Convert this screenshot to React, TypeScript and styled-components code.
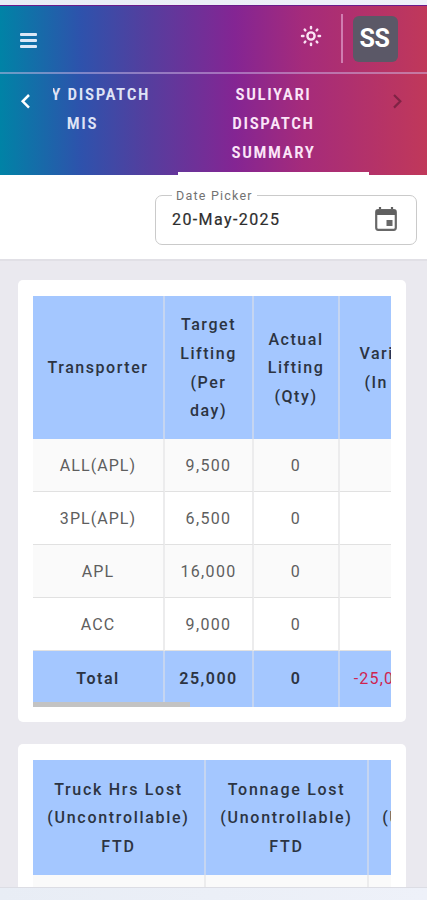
import React from "react";
import styled, { createGlobalStyle } from "styled-components";

const Global = createGlobalStyle`
  * { box-sizing: border-box; }
  body { margin: 0; background: #edf0f7; font-family: Roboto, "Liberation Sans", sans-serif; overflow: hidden; }
`;

const Page = styled.div`
  width: 427px;
  height: 900px;
  display: flex;
  flex-direction: column;
  padding: 5px 0 12px;
  background: linear-gradient(to right, #e8edf5, #eef1f9);
`;

const Masthead = styled.header`
  flex: none;
  height: 170px;
  background: linear-gradient(90deg, #0083a6 0%, #2e52ac 19%, #51409f 33%, #842593 55%, #a52b7b 71%, #c0385a 100%);
  border-top: 1px solid #6b1b8c;
`;

const TopBar = styled.div`
  height: 68px;
  display: flex;
  align-items: center;
  padding: 0 29px 4px 20px;
  border-bottom: 2px solid rgba(205, 185, 230, 0.5);
`;

const MenuButton = styled.button`
  display: flex;
  flex-direction: column;
  gap: 3px;
  padding: 6px 0 0;
  border: 0;
  background: none;
`;

const MenuBar = styled.span`
  width: 17px;
  height: 3px;
  border-radius: 1px;
  background: #dce8f7;
`;

const SunIcon = styled.svg`
  margin-left: auto;
  margin-right: 19px;
  margin-top: -2px;
`;

const Divider = styled.span`
  width: 2px;
  height: 49px;
  margin-right: 10px;
  margin-top: 3px;
  background: rgba(236, 190, 228, 0.55);
`;

const Avatar = styled.div`
  width: 45px;
  height: 46px;
  margin-top: 3px;
  border-radius: 6px;
  background: #5b5867;
  color: #fff;
  font-size: 25px;
  font-weight: 700;
  letter-spacing: -0.4px;
  padding-right: 2px;
  display: flex;
  align-items: center;
  justify-content: center;
`;

const TabStrip = styled.nav`
  height: 101px;
  display: flex;
`;

const ScrollArrow = styled.svg<{ $dim?: boolean }>`
  flex: none;
  width: ${(p) => (p.$dim ? 58 : 53)}px;
  height: 54px;
  color: ${(p) => (p.$dim ? "rgba(80,20,45,.55)" : "#fff")};
`;

const TabWindow = styled.div`
  width: 316px;
  display: flex;
  overflow: hidden;
`;

const Tab = styled.div<{ $w: number; $shift?: number; $active?: boolean }>`
  flex: none;
  width: ${(p) => p.$w}px;
  margin-left: ${(p) => p.$shift ?? 0}px;
  padding-top: 6px;
  text-align: center;
  color: ${(p) => (p.$active ? "#fbe5f8" : "#dfe3f6")};
  font-family: "Roboto Condensed", Roboto, sans-serif;
  font-stretch: 75%;
  font-size: 17px;
  font-weight: 600;
  line-height: 29px;
  letter-spacing: 1.6px;
  border-bottom: ${(p) => (p.$active ? "3px solid #fff" : "0")};
`;

const Line = styled.span`
  display: block;
  white-space: nowrap;
`;

const FilterBar = styled.section`
  flex: none;
  height: 86px;
  display: flex;
  justify-content: flex-end;
  padding: 14px 10px 0 0;
  background: #fff;
  border-bottom: 2px solid #e1e0e6;
`;

const DateField = styled.fieldset`
  width: 262px;
  height: 56px;
  margin: 0;
  padding: 0 17px 0 16px;
  border: 1px solid #cacaca;
  border-radius: 7px;
  display: flex;
  align-items: center;
  justify-content: space-between;
`;

const DateLegend = styled.legend`
  padding: 0 4px;
  height: 12px;
  font-size: 12.5px;
  line-height: 14px;
  letter-spacing: 1.22px;
  color: #727272;
`;

const DateValue = styled.span`
  font-size: 16px;
  line-height: 20px;
  letter-spacing: 1.4px;
  color: #2d2d2d;
  -webkit-text-stroke: 0.2px #2d2d2d;
  margin-top: -5px;
`;

const CalendarIcon = styled.svg`
  margin-top: -7px;
`;

const Content = styled.main`
  flex: 1;
  min-height: 0;
  overflow: hidden;
  display: flex;
  flex-direction: column;
  gap: 22px;
  padding: 19px 21px 0 18px;
  background: #eae9ef;
  border-bottom: 1px solid #dcdde4;
`;

const Card = styled.section`
  flex: none;
  height: 442px;
  padding: 16px 15px;
  border-radius: 5px;
  background: #fff;
`;

const TableWindow = styled.div`
  overflow: hidden;
`;

const Grid = styled.div<{ $cols: string; $rows: string }>`
  width: max-content;
  display: grid;
  grid-template-columns: ${(p) => p.$cols};
  grid-template-rows: ${(p) => p.$rows};
`;

type Kind = "head" | "odd" | "even" | "total";

const Cell = styled.div<{ $kind: Kind; $red?: boolean; $tracking?: number }>`
  display: flex;
  flex-direction: column;
  align-items: center;
  justify-content: center;
  font-size: 16px;
  line-height: 28.6px;
  letter-spacing: ${(p) => p.$tracking ?? 1.35}px;
  font-weight: ${(p) => (p.$red ? 400 : p.$kind === "head" ? 500 : p.$kind === "total" ? 600 : 400)};
  color: ${(p) => (p.$red ? "#cf2450" : p.$kind === "head" || p.$kind === "total" ? "#2c3442" : "#5e5e5e")};
  background: ${(p) => (p.$kind === "head" || p.$kind === "total" ? "#a4c7ff" : p.$kind === "odd" ? "#fafafa" : "#fff")};
  border-right: 2px solid ${(p) => (p.$kind === "head" || p.$kind === "total" ? "#c5d5f1" : "#ececed")};
  border-bottom: ${(p) => (p.$kind === "odd" || p.$kind === "even" ? "1px solid #e1e1e1" : "0")};
  padding-top: ${(p) => (p.$kind === "total" ? 0 : 2)}px;
`;

const ScrollThumb = styled.div`
  position: relative;
  width: 157px;
  height: 5px;
  margin-top: -5px;
  background: #c3c3c3;
`;

const transporterRows: { kind: Kind; cells: string[] }[] = [
  { kind: "odd", cells: ["ALL(APL)", "9,500", "0", ""] },
  { kind: "even", cells: ["3PL(APL)", "6,500", "0", ""] },
  { kind: "odd", cells: ["APL", "16,000", "0", ""] },
  { kind: "even", cells: ["ACC", "9,000", "0", ""] },
  { kind: "total", cells: ["Total", "25,000", "0", "-25,000.00"] },
];

const transporterHeads = [["Transporter"], ["Target", "Lifting", "(Per", "day)"], ["Actual", "Lifting", "(Qty)"], ["Variance", "(In Qty)"]];
const lossHeads = [["Truck Hrs Lost", "(Uncontrollable)", "FTD"], ["Tonnage Lost", "(Unontrollable)", "FTD"], ["Trucks Lost", "(Uncontrollable)", "MTD"]];

function Heads({ items, tracking }: { items: string[][]; tracking: number }) {
  return (
    <>
      {items.map((lines, i) => (
        <Cell key={i} $kind="head" $tracking={tracking}>
          {lines.map((t) => <Line key={t}>{t}</Line>)}
        </Cell>
      ))}
    </>
  );
}

export default function App() {
  return (
    <Page>
      <Global />
      <Masthead>
        <TopBar>
          <MenuButton aria-label="Menu"><MenuBar /><MenuBar /><MenuBar /></MenuButton>
          <SunIcon width="22" height="22" viewBox="0 0 22 22" fill="none" stroke="#fae3f4" strokeWidth="2.5" strokeLinecap="round">
            <circle cx="11" cy="11" r="3.6" strokeWidth="2.4" />
            <path d="M11 2v1.2M11 18.8v1.2M2 11h1.4M18.6 11h1.4M4.7 4.7l.6.6M16.7 16.7l.6.6M17.3 4.7l-.6.6M5.3 16.7l-.6.6" />
          </SunIcon>
          <Divider />
          <Avatar>SS</Avatar>
        </TopBar>
        <TabStrip>
          <ScrollArrow viewBox="0 0 53 54" fill="none" stroke="currentColor" strokeWidth="2.5">
            <path d="M29 21l-6.3 6.3 6.3 6.3" />
          </ScrollArrow>
          <TabWindow>
            <Tab $w={191} $shift={-66}><Line>DAILY DISPATCH</Line><Line>MIS</Line></Tab>
            <Tab $w={191} $active><Line>SULIYARI</Line><Line>DISPATCH</Line><Line>SUMMARY</Line></Tab>
          </TabWindow>
          <ScrollArrow $dim viewBox="0 0 58 54" fill="none" stroke="currentColor" strokeWidth="2.2">
            <path d="M25 21l6.3 6.3-6.3 6.3" />
          </ScrollArrow>
        </TabStrip>
      </Masthead>
      <FilterBar>
        <DateField>
          <DateLegend>Date Picker</DateLegend>
          <DateValue>20-May-2025</DateValue>
          <CalendarIcon width="26" height="28" viewBox="0 0 26 28">
            <path d="M7 2v5M19 2v5" stroke="#606060" strokeWidth="2.2" />
            <rect x="3.2" y="5.2" width="19.6" height="19.6" rx="2" fill="none" stroke="#686868" strokeWidth="2.2" />
            <path d="M3 5h20v5H3z" fill="#606060" />
            <rect x="13.5" y="15" width="6" height="6" fill="#686868" />
          </CalendarIcon>
        </DateField>
      </FilterBar>
      <Content>
        <Card>
          <TableWindow>
            <Grid $cols="132px 89px 86px 116px" $rows="143px 53px 53px 53px 53px 56px">
              <Heads items={transporterHeads} tracking={1.55} />
              {transporterRows.map((row) =>
                row.cells.map((text, i) => (
                  <Cell
                    key={row.cells[0] + i}
                    $kind={row.kind}
                    $red={i === 3}
                    $tracking={row.kind === "total" ? (i === 3 ? 1.2 : 1.5) : i === 0 ? 1.05 : 1.35}
                  >
                    {text}
                  </Cell>
                )),
              )}
            </Grid>
            <ScrollThumb />
          </TableWindow>
        </Card>
        <Card>
          <TableWindow>
            <Grid $cols="173px 163px 171px" $rows="115px 53px">
              <Heads items={lossHeads} tracking={1.7} />
              <Cell $kind="odd" /><Cell $kind="odd" /><Cell $kind="odd" />
            </Grid>
          </TableWindow>
        </Card>
      </Content>
    </Page>
  );
}
